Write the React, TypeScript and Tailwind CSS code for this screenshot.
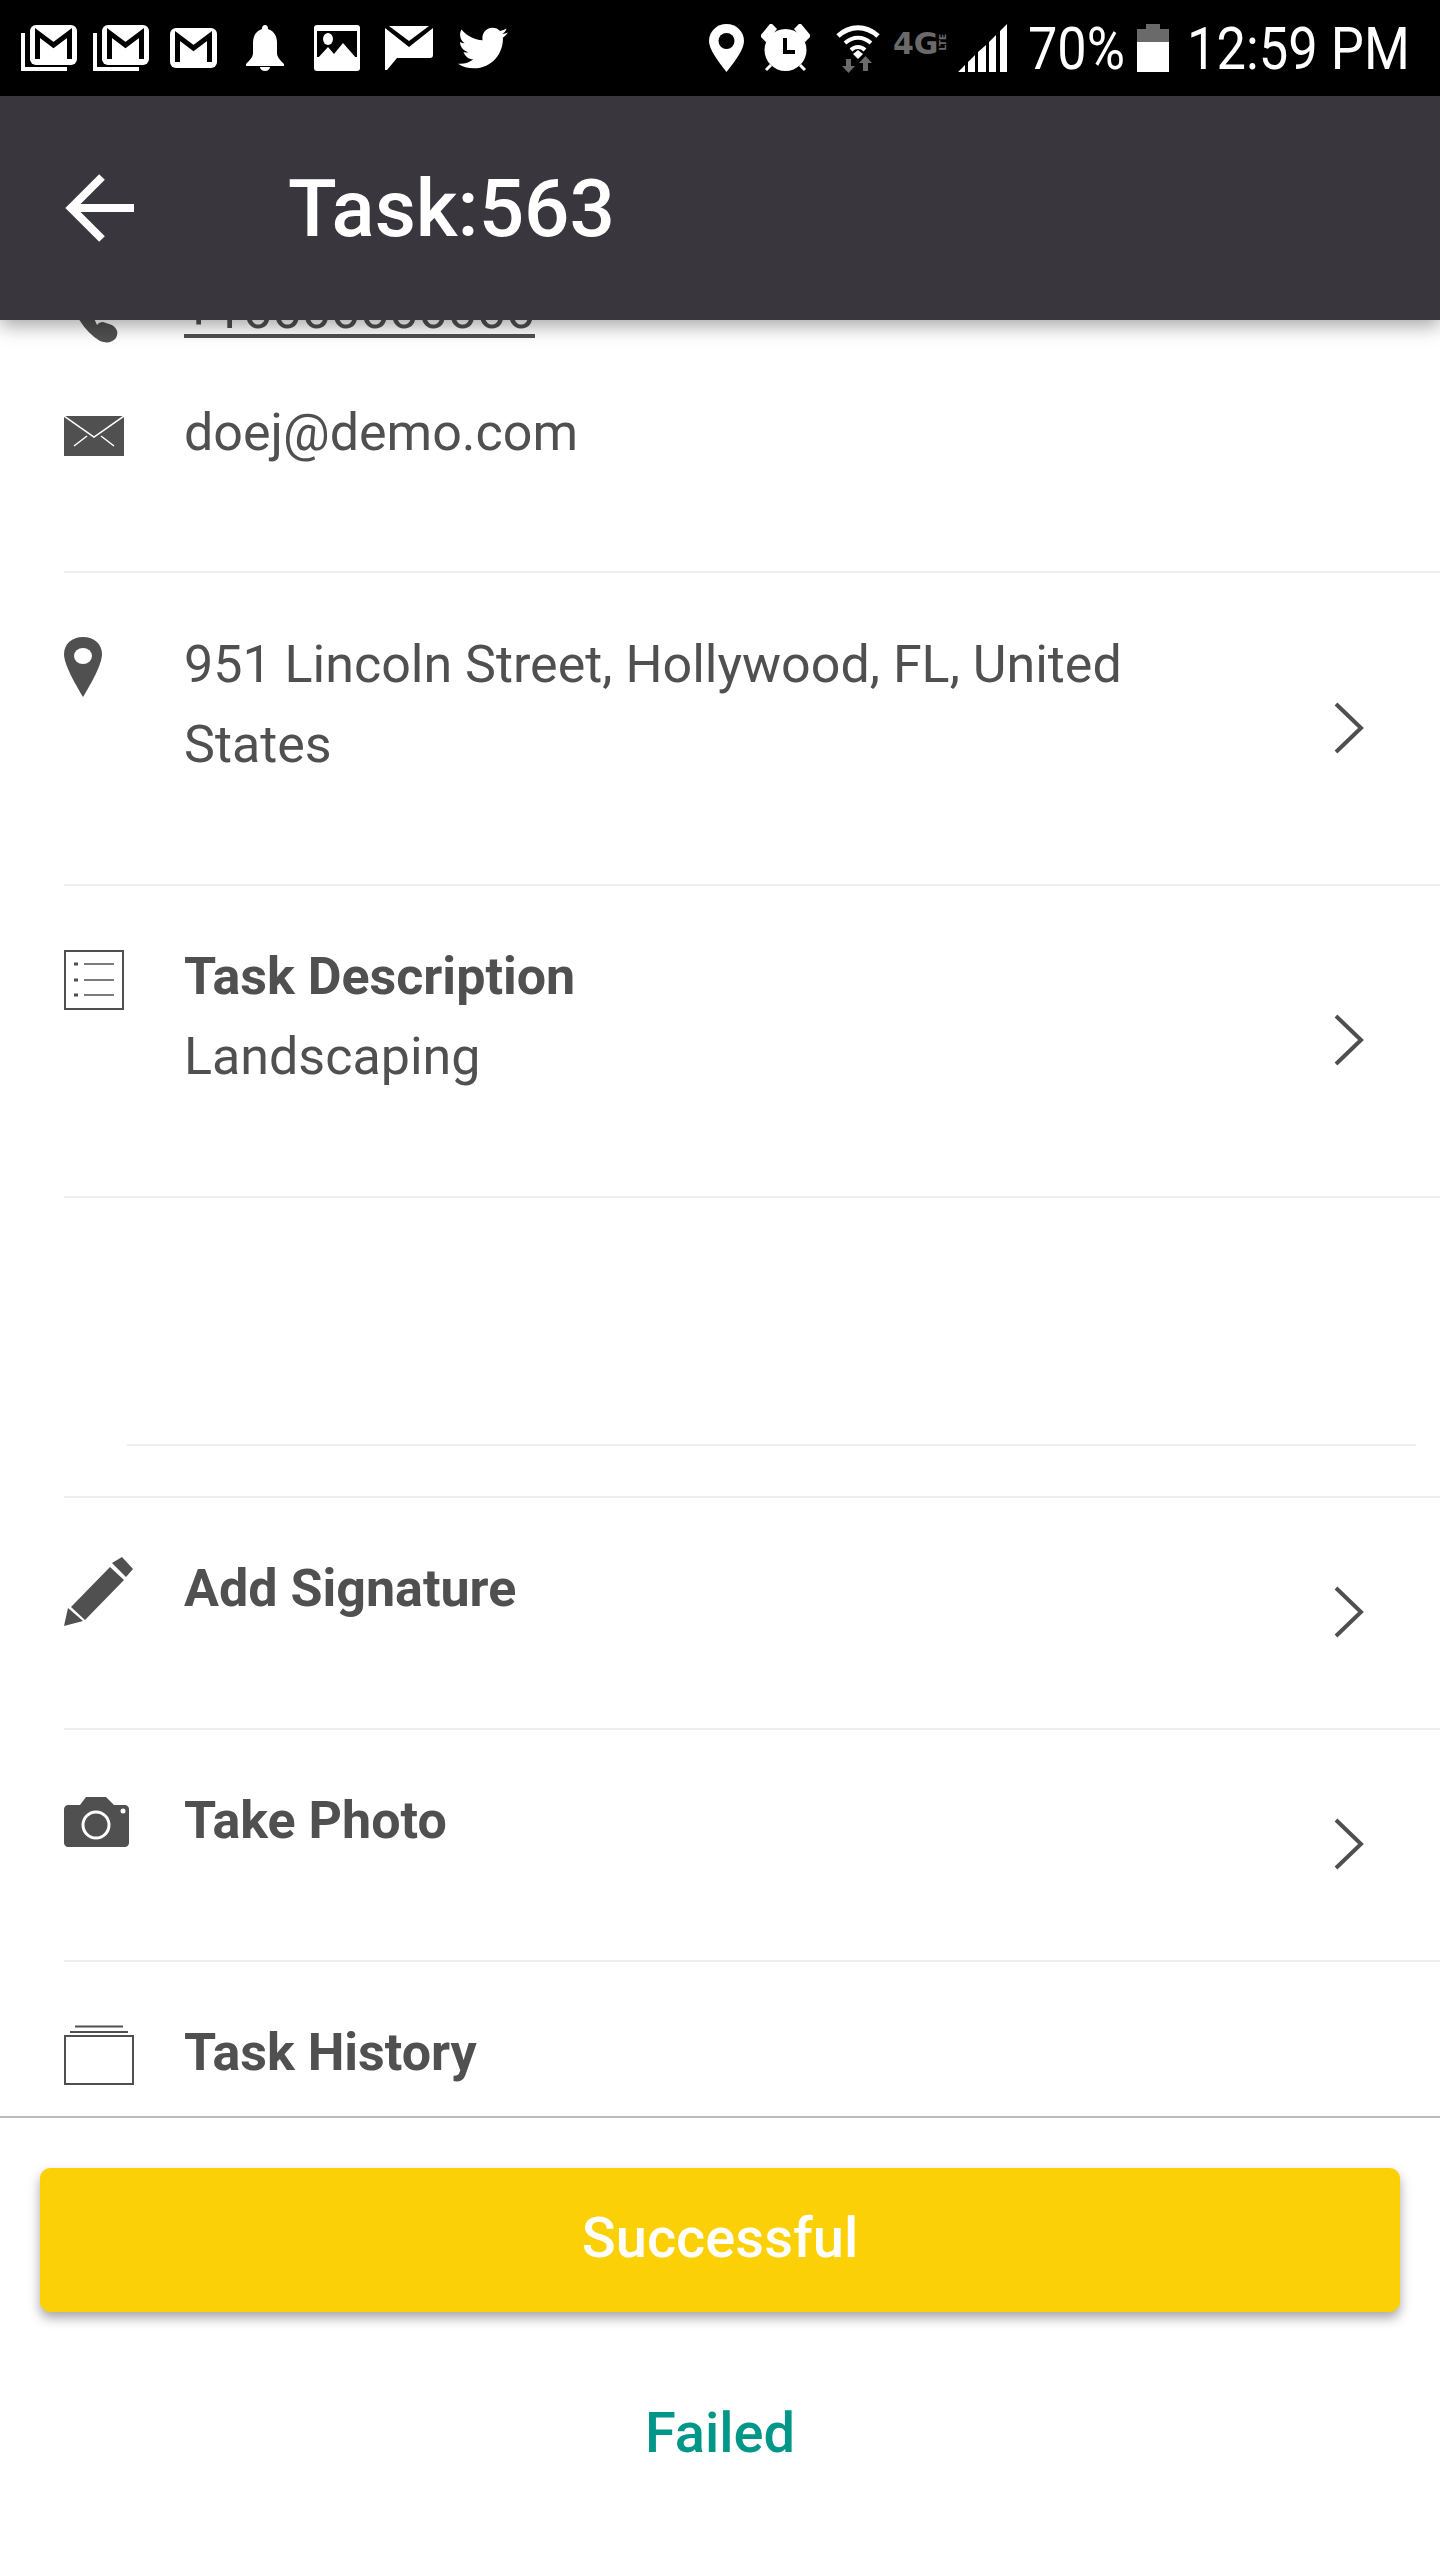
import type { ReactNode } from "react";
import { FaTwitter } from "react-icons/fa";

const Chevron = () => (
  <svg width="32" height="54" viewBox="0 0 32 54" fill="none" className="mb-[2px] shrink-0">
    <path d="M3 3l25 24-25 24" stroke="#4f4f4f" strokeWidth="4" />
  </svg>
);

const GmailGlyph = ({ x = 0 }: { x?: number }) => (
  <g transform={`translate(${x} 0)`}>
    <rect width="47" height="40" rx="6" fill="#fff" />
    <path d="M7.500 34V8l16 12 16-12v26" stroke="#000" strokeWidth="5" fill="none" />
  </g>
);

const GmailStack = () => (
  <svg width="56" height="46" viewBox="0 0 56 46">
    <path d="M2 8v36h44" stroke="#fff" strokeWidth="4" fill="none" />
    <rect x="7" y="-2" width="51" height="44" rx="7" fill="#000" />
    <GmailGlyph x={9} />
  </svg>
);

const StatusLeft = () => (
  <div className="flex items-center">
    <GmailStack />
    <div className="ml-4">
      <GmailStack />
    </div>
    <svg width="47" height="40" viewBox="0 0 47 40" className="ml-[21px]">
      <GmailGlyph />
    </svg>
    <svg width="38" height="46" viewBox="0 0 38 46" fill="#fff" className="ml-[29px]">
      <path d="M19 0c2 0 3 1.500 3 4 6 2 9 7 9 14v10c0 4 3 7 7 11v2H0v-2c4-4 7-7 7-11V18c0-7 3-12 9-14 0-2.500 1-4 3-4z" />
      <path d="M14 42h10c0 2-2 4-5 4s-5-2-5-4z" />
    </svg>
    <svg width="46" height="46" viewBox="0 0 46 46" className="ml-[30px]">
      <rect width="46" height="46" rx="3" fill="#fff" />
      <rect x="3" y="6" width="40" height="26" fill="#000" />
      <path d="M3 34l11-12 6 7 9-11 14 16v2H3z" fill="#fff" />
      <ellipse cx="14" cy="14" rx="5" ry="6" fill="#fff" />
    </svg>
    <svg width="48" height="44" viewBox="0 0 48 44" fill="#fff" className="ml-[25px]">
      <path d="M0 2l24 19L48 2v27c0 2-1 3-3 3H12L2 44H0z" />
      <path d="M4 0h40L24 15z" />
    </svg>
    <FaTwitter className="ml-[25px] text-white" size={50} />
  </div>
);

const StatusRight = () => (
  <div className="flex items-center">
    <svg width="35" height="48" viewBox="0 0 35 48">
      <path d="M17.500 0C7.800 0 0 7.500 0 17c0 8 8 19 17.500 31C27 36 35 25 35 17 35 7.500 27.200 0 17.500 0z" fill="#fff" />
      <circle cx="17.500" cy="17" r="8" fill="#000" />
    </svg>
    <svg width="49" height="48" viewBox="0 0 49 48" className="ml-[17px]">
      <circle cx="24.500" cy="26" r="21" fill="#fff" />
      <path d="M24 14v14h10" stroke="#000" strokeWidth="4" fill="none" />
      <path d="M1 12L10 1l4 4L5 16zM48 12L39 1l-4 4 9 11zM5 46l5-5M44 46l-5-5" stroke="#fff" strokeWidth="3" fill="#fff" />
    </svg>
    <svg width="44" height="49" viewBox="0 0 44 49" className="ml-[26px]">
      <path d="M2 12c12-11 28-11 40 0" stroke="#fff" strokeWidth="5" fill="none" />
      <path d="M9 19c8-7 18-7 26 0M15 26c4-4 10-4 14 0" stroke="#fff" strokeWidth="4" fill="none" />
      <path d="M17 30l5-4 5 4-5 5z" fill="#fff" />
      <path d="M10 35h5v7h4l-6.500 7L6 42h4zM29.500 32l6.500 7h-4v8h-5v-8h-4z" fill="#6a6a6a" />
    </svg>
    <div className="mb-[8px] ml-[13px] flex h-6 w-[55px] items-center font-['DejaVu_Sans',sans-serif] text-[30px] leading-none font-bold whitespace-nowrap text-[#6a6a6a]">
      4G
      <span className="ml-[-2px] w-[12px] -rotate-90 text-center text-[9px] leading-none">LTE</span>
    </div>
    <svg width="50" height="48" viewBox="0 0 50 48" fill="#fff" className="ml-[10px]">
      <path d="M0 48l7-7v7zM10 38l7-7v17h-7zM20 28l8-7v27h-8zM31 18l7-7v37h-7zM42 7l7-7v48h-7z" />
    </svg>
    <div className="mt-[2px] ml-[20px] w-[109px] origin-left scale-x-[0.87] text-[60px] leading-none whitespace-nowrap text-white">
      70%
    </div>
    <svg width="32" height="48" viewBox="0 0 32 48">
      <path d="M9 0h14v5h9v13H0V5h9z" fill="#6a6a6a" />
      <rect y="18" width="32" height="30" fill="#fff" />
    </svg>
    <div className="mt-[2px] ml-[18px] w-[220px] origin-left scale-x-[0.875] text-[60px] leading-none whitespace-nowrap text-white">
      12:59 PM
    </div>
  </div>
);

const Row = ({ icon, children, chevron, className }: { icon: ReactNode; children: ReactNode; chevron?: boolean; className: string }) => (
  <div className={`ml-16 flex items-center border-t-2 border-[#eeeeee] pr-[75px] ${className}`}>
    <div className="mb-[49px] flex min-w-0 flex-1 items-start">
      <div className="flex h-[80px] w-[120px] shrink-0 items-start pt-[14px]">{icon}</div>
      <div className="flex-1 pr-20">{children}</div>
    </div>
    {chevron && <Chevron />}
  </div>
);

export default function App() {
  return (
    <div className="flex h-[2560px] w-[1440px] flex-col overflow-hidden bg-white font-['Roboto',sans-serif] text-[52px] leading-[80px] text-[#505050]">
      <div className="flex h-24 shrink-0 items-center justify-between bg-black pr-[33px] pl-[21px]">
        <StatusLeft />
        <StatusRight />
      </div>

      <header className="relative z-10 flex h-[224px] shrink-0 items-center bg-[#3a363e] pl-16 shadow-[0_6px_18px_rgba(0,0,0,0.35)]">
        <svg width="70" height="70" viewBox="0 0 70 70" fill="none">
          <path d="M38 4L7 35l31 31M7 35h63" stroke="#fff" strokeWidth="8" />
        </svg>
        <h1 className="ml-[154px] pt-[2px] text-[80px] leading-none font-medium text-white">Task:563</h1>
      </header>

      <main className="h-[1798px] shrink-0 overflow-hidden border-b-2 border-[#bbbbbb]">
        <div className="mt-[-49px] pb-[98px] pl-16">
          <div className="flex h-[80px] items-start">
            <svg width="60" height="80" viewBox="64 271 60 80" className="mr-[60px] shrink-0 overflow-visible">
              <path d="M66 290Q78 328 100 341Q110 345 116 338Q120 330 112 325L103 322Q99 322 97 325L88 305Z" fill="#505050" />
            </svg>
            <span className="underline decoration-[4px] underline-offset-[6px]">+16666666666</span>
          </div>
          <div className="mt-[42px] flex h-[80px] items-start">
            <div className="w-[120px] shrink-0 pt-[23px]">
              <svg width="60" height="40" viewBox="0 0 60 40">
                <rect width="60" height="40" fill="#505050" />
                <path d="M0 0l30 21L60 0M10 30l13-10M50 30L37 20" stroke="#fff" strokeWidth="1.500" fill="none" />
              </svg>
            </div>
            <span>doej@demo.com</span>
          </div>
        </div>

        <Row
          chevron
          className="h-[313px]"
          icon={
            <svg width="38" height="60" viewBox="0 0 38 60">
              <path d="M19 0C8 0 0 7 0 17c0 10 10 28 19 43 9-15 19-33 19-43C38 7 30 0 19 0z" fill="#505050" />
              <ellipse cx="19" cy="19" rx="9" ry="8" fill="#fff" />
            </svg>
          }
        >
          <div className="pt-[2px]">951 Lincoln Street, Hollywood, FL, United States</div>
        </Row>

        <Row
          chevron
          className="h-[312px]"
          icon={
            <svg width="60" height="60" viewBox="0 0 60 60" fill="none" className="mt-[-1px]">
              <rect x="1" y="1" width="58" height="58" stroke="#505050" strokeWidth="2" />
              <path d="M20 14h30M20 30h30M20 45h30" stroke="#505050" strokeWidth="1.500" />
              <path d="M10 14h4M10 30h4M10 45h4" stroke="#505050" strokeWidth="3" />
            </svg>
          }
        >
          <p className="font-bold">Task Description</p>
          <p>Landscaping</p>
        </Row>

        <div className="ml-16 h-[300px] border-t-2 border-[#eeeeee] pr-6">
          <div className="ml-[63px] h-[248px] border-b-2 border-[#eeeeee]" />
        </div>

        <Row
          chevron
          className="h-[232px]"
          icon={
            <svg width="70" height="70" viewBox="0 0 70 70" fill="#505050" className="mt-[-6px]">
              <path d="M0 69l4-18 15 13zM7 50L46 10l14 13-39 40zM48 6L58 0l11 12-7 8z" />
            </svg>
          }
        >
          <p className="font-bold">Add Signature</p>
        </Row>

        <Row
          chevron
          className="h-[232px]"
          icon={
            <svg width="65" height="50" viewBox="0 0 65 50" className="mt-[2px]">
              <path d="M4 8h12l6-8h20l8 8h11c2 0 4 2 4 4v34c0 2-2 4-4 4H4c-2 0-4-2-4-4V12c0-2 2-4 4-4z" fill="#505050" />
              <circle cx="32" cy="28" r="13" fill="none" stroke="#fff" strokeWidth="3" />
              <circle cx="59" cy="14" r="2.500" fill="#fff" />
            </svg>
          }
        >
          <p className="font-bold">Take Photo</p>
        </Row>

        <Row
          className="h-[232px]"
          icon={
            <svg width="70" height="60" viewBox="0 0 70 60" fill="none" className="mt-[-2px]">
              <rect x="1" y="11" width="68" height="48" stroke="#505050" strokeWidth="2" />
              <path d="M6 7h58M11 1.500h48" stroke="#505050" strokeWidth="2" />
            </svg>
          }
        >
          <p className="font-bold">Task History</p>
        </Row>
      </main>

      <footer className="flex flex-1 flex-col items-center">
        <button
          type="button"
          className="mt-[50px] h-[144px] w-[1360px] rounded-[10px] bg-[#fbd006] pb-[4px] text-[56px] font-medium text-white shadow-[0_6px_12px_rgba(0,0,0,0.35)]"
        >
          Successful
        </button>
        <button type="button" className="mt-[81px] text-[56px] font-medium text-[#009688]">
          Failed
        </button>
      </footer>
    </div>
  );
}
